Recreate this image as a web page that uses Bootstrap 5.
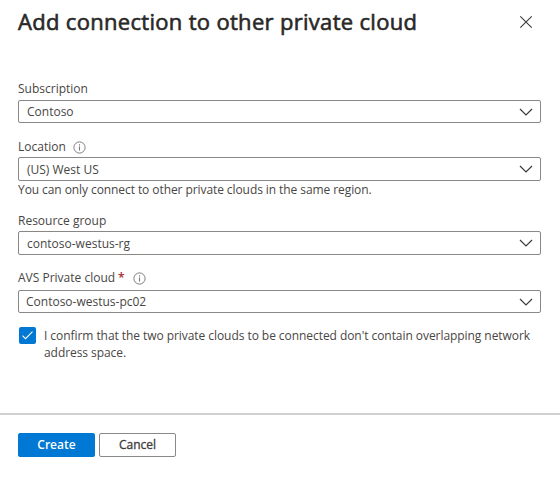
<!DOCTYPE html>
<html lang="en">
<head>
<meta charset="utf-8">
<meta name="viewport" content="width=device-width, initial-scale=1">
<title>Add connection to other private cloud</title>
<link href="https://cdn.jsdelivr.net/npm/bootstrap@5.3.0/dist/css/bootstrap.min.css" rel="stylesheet">
<style>
  body { font: 12px/17px "Open Sans", "Noto Sans", sans-serif; color: #484644; background: #fff; overflow: hidden; }
  .panel { height: 477px; }
  .panel-head { height: 80px; padding: 5px 27px 0 18px; }
  .panel-title { font-size: 22px; line-height: 32px; font-weight: 400; color: #292827; letter-spacing: .31px; -webkit-text-stroke: .6px #292827; }
  .close-btn { width: 14px; height: 14px; margin-top: 10px; }
  .panel-body { height: 333px; padding: 0 19px 0 18px; }
  .field-label { height: 20px; line-height: 18px; }
  .picker { height: 23px; padding: 0 7px 0 8px; border: 1px solid #8a8886; border-radius: 2px; background: #fff; color: #484644; text-align: left; }
  .f-location { margin-top: 14px; }
  .f-location .picker { height: 24px; }
  .hint { height: 18px; line-height: 17px; letter-spacing: -.08px; }
  .f-group { margin-top: 12px; }
  .f-group .field-label { line-height: 20px; }
  .f-group .picker { height: 24px; }
  .f-cloud { margin-top: 14px; }
  .f-cloud .field-label { height: 21px; }
  .f-cloud .picker { padding-left: 7px; }
  .star { color: #a4262c; font-weight: 600; margin-left: 3px; }
  .info { margin-left: 7px; }
  .f-cloud .info { margin: 3px 0 0 8px; }
  .tick { width: 17px; height: 17px; border-radius: 2px; background: #0078d4; margin: 0 8px 0 1px; }
  .confirm { margin-top: 14px; letter-spacing: -.06px; }
  .panel-foot { border-top: 2px solid #d2d0ce; padding: 18px; gap: 4px; }
  .act { width: 77px; height: 24px; padding: 0; font-size: 12px; line-height: 20px; border-radius: 2px; }
  .act-main { --bs-btn-bg: #0078d4; --bs-btn-border-color: #0078d4; font-weight: 600; }
  .act-plain { --bs-btn-color: #3b3a39; --bs-btn-border-color: #8a8886; --bs-btn-bg: #fff; font-weight: 400; -webkit-text-stroke: .3px #3b3a39; }
  svg { display: block; flex: none; }
</style>
</head>
<body>
<svg class="d-none" aria-hidden="true">
  <symbol id="chev" viewBox="0 0 14 8"><path d="M1 1l6 6 6-6" fill="none" stroke="#3b3a39" stroke-width="1.2"/></symbol>
  <symbol id="inf" viewBox="0 0 13 13"><circle cx="6.5" cy="6.5" r="5.6" fill="none" stroke="#797775" stroke-width=".95"/><path d="M6.5 5.5v4M6.5 3.2v1.3" stroke="#797775" stroke-width="1.1"/></symbol>
</svg>
<main class="panel d-flex flex-column">
  <header class="panel-head d-flex justify-content-between align-items-start">
    <h1 class="panel-title m-0 text-nowrap">Add connection to other private cloud</h1>
    <button type="button" class="close-btn btn p-0 border-0" aria-label="Close">
      <svg width="14" height="14" viewBox="0 0 14 14"><path d="M1.3 1.3l11.4 11.4M12.7 1.3L1.3 12.7" stroke="#3b3a39" stroke-width="1.1"/></svg>
    </button>
  </header>
  <section class="panel-body">
    <div>
      <div class="field-label"><span>Subscription</span></div>
      <button type="button" class="picker w-100 d-flex align-items-center justify-content-between"><span>Contoso</span><svg width="14" height="8"><use href="#chev"/></svg></button>
    </div>
    <div class="f-location">
      <div class="field-label d-flex align-items-center"><span>Location</span><svg class="info" width="13" height="13"><use href="#inf"/></svg></div>
      <button type="button" class="picker w-100 d-flex align-items-center justify-content-between"><span>(US) West US</span><svg width="14" height="8"><use href="#chev"/></svg></button>
      <div class="hint"><span>You can only connect to other private clouds in the same region.</span></div>
    </div>
    <div class="f-group">
      <div class="field-label"><span>Resource group</span></div>
      <button type="button" class="picker w-100 d-flex align-items-center justify-content-between"><span>contoso-westus-rg</span><svg width="14" height="8"><use href="#chev"/></svg></button>
    </div>
    <div class="f-cloud">
      <div class="field-label d-flex align-items-start"><span>AVS Private cloud</span><span class="star">*</span><svg class="info" width="13" height="13"><use href="#inf"/></svg></div>
      <button type="button" class="picker w-100 d-flex align-items-center justify-content-between"><span>Contoso-westus-pc02</span><svg width="14" height="8"><use href="#chev"/></svg></button>
    </div>
    <div class="confirm d-flex align-items-start">
      <span class="tick flex-shrink-0" role="checkbox" aria-checked="true"><svg width="17" height="17" viewBox="0 0 17 17"><path d="M3.5 8.7l3 3 7-7" fill="none" stroke="#fff" stroke-width="1.1"/></svg></span>
      <span class="text-nowrap">I confirm that the two private clouds to be connected don't contain overlapping network<br>address space.</span>
    </div>
  </section>
  <footer class="panel-foot d-flex">
    <button type="button" class="btn btn-primary act act-main">Create</button>
    <button type="button" class="btn act act-plain">Cancel</button>
  </footer>
</main>
<script src="https://cdn.jsdelivr.net/npm/bootstrap@5.3.0/dist/js/bootstrap.bundle.min.js"></script>
</body>
</html>
